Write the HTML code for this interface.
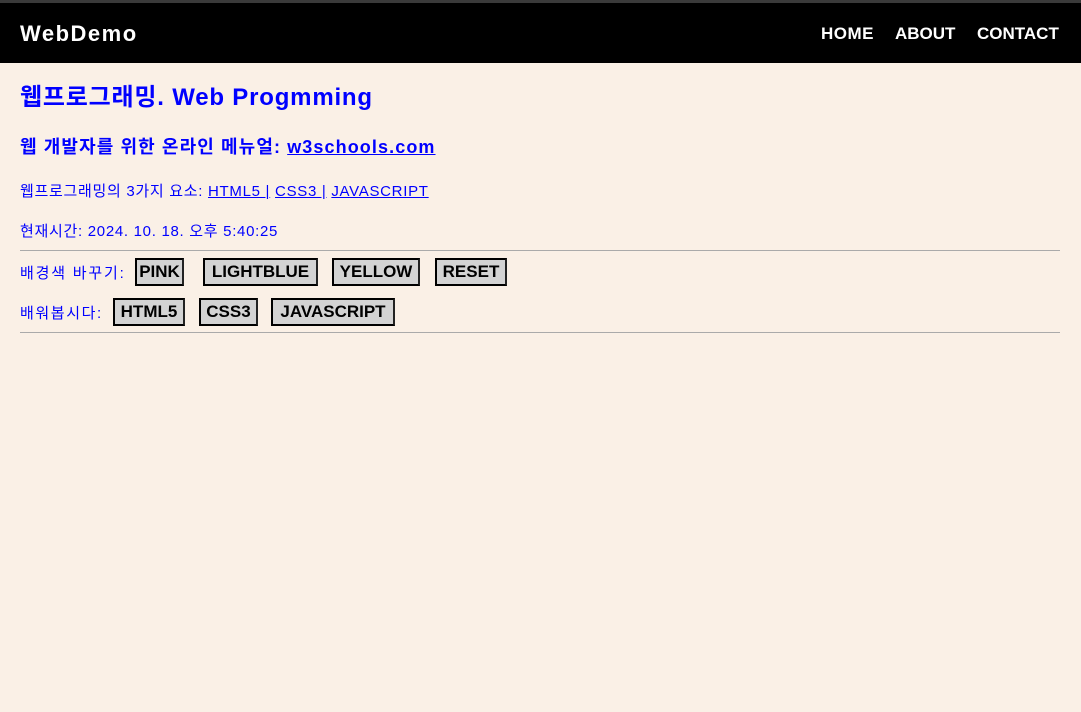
<!DOCTYPE html>
<html><head><meta charset="utf-8"><style>
body{margin:0;width:1081px;height:712px;background:#faf0e6;font-family:"Liberation Sans","Noto Sans CJK KR",sans-serif;color:#00f;position:relative;overflow:hidden}
.top{position:absolute;left:0;top:0;width:1081px;height:3px;background:#3a3a3a}
nav{position:absolute;left:0;top:3px;width:1081px;height:60px;background:#000;color:#fff;font-weight:bold}
.a{position:absolute;white-space:nowrap}
.hr{position:absolute;left:20px;width:1040px;height:1px;background:#aaa}
.b{position:absolute;height:24px;border:2px solid #000;border-right-color:#222;background:#d3d3d3;color:#000;font:bold 17px/24px "Liberation Sans",sans-serif;text-align:center;box-sizing:content-box}
a{color:#00f}
</style></head><body>
<div class="top"></div>
<nav><div class="a" style="left:20px;top:18px;font-size:22px;letter-spacing:1.5px">WebDemo</div>
<div class="a" style="left:821px;top:21px;font-size:17px;letter-spacing:0.5px">HOME</div>
<div class="a" style="left:895px;top:21px;font-size:17px">ABOUT</div>
<div class="a" style="left:977px;top:21px;font-size:17px">CONTACT</div></nav>
<div class="a" style="left:20px;top:77px;font-size:24px;font-weight:bold;letter-spacing:0.8px">웹프로그래밍. Web Progmming</div>
<div class="a" style="left:20px;top:133px;font-size:18px;font-weight:bold;letter-spacing:1.1px">웹 개발자를 위한 온라인 메뉴얼: <a href="#">w3schools.com</a></div>
<div class="a" style="left:20px;top:180px;font-size:15px;letter-spacing:0.7px">웹프로그래밍의 3가지 요소: <a href="#">HTML5 |</a> <a href="#">CSS3 |</a> <a href="#">JAVASCRIPT</a></div>
<div class="a" style="left:20px;top:220px;font-size:15px;letter-spacing:0.7px">현재시간: 2024. 10. 18. 오후 5:40:25</div>
<div class="hr" style="top:250px"></div>
<div class="a" style="left:20px;top:262px;font-size:15px;letter-spacing:1.8px">배경색 바꾸기:</div>
<div class="b" style="left:135px;top:258px;width:45px">PINK</div>
<div class="b" style="left:203px;top:258px;width:111px">LIGHTBLUE</div>
<div class="b" style="left:332px;top:258px;width:84px">YELLOW</div>
<div class="b" style="left:435px;top:258px;width:68px">RESET</div>
<div class="a" style="left:20px;top:302px;font-size:15px;letter-spacing:1.6px">배워봅시다:</div>
<div class="b" style="left:113px;top:298px;width:68px">HTML5</div>
<div class="b" style="left:199px;top:298px;width:55px">CSS3</div>
<div class="b" style="left:271px;top:298px;width:120px">JAVASCRIPT</div>
<div class="hr" style="top:332px"></div>
</body></html>
